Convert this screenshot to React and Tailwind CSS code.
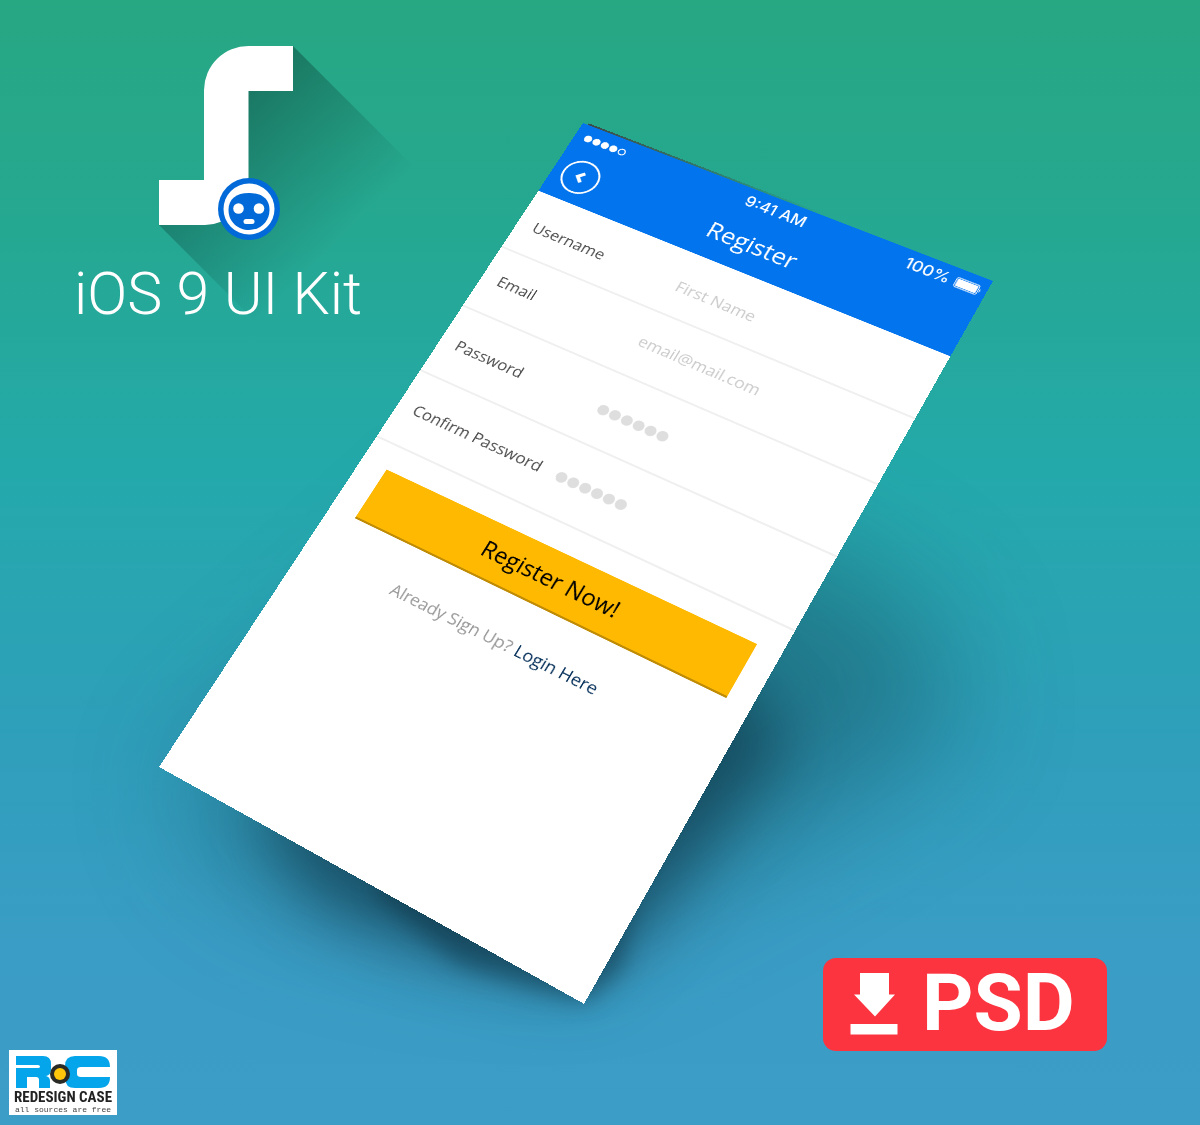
import React from "react";

const SCREEN = { width: 640, height: 1136 };

// Corners of the tilted screen, measured from the top centre of the poster:
// top-left, top-right, bottom-right, bottom-left.
const CORNERS = [
  [-17, 123],
  [393, 281],
  [-16, 1004],
  [-441, 767],
];

function perspective({ width, height }, [[x0, y0], [x1, y1], [x2, y2], [x3, y3]]) {
  const dx1 = x1 - x2;
  const dy1 = y1 - y2;
  const dx2 = x3 - x2;
  const dy2 = y3 - y2;
  const sx = x0 - x1 + x2 - x3;
  const sy = y0 - y1 + y2 - y3;
  const det = dx1 * dy2 - dx2 * dy1;
  const g = (sx * dy2 - sy * dx2) / det;
  const h = (dx1 * sy - dy1 * sx) / det;
  const a = x1 - x0 + g * x1;
  const b = x3 - x0 + h * x3;
  const d = y1 - y0 + g * y1;
  const e = y3 - y0 + h * y3;
  const m = [
    a / width, d / width, 0, g / width,
    b / height, e / height, 0, h / height,
    0, 0, 1, 0,
    x0, y0, 0, 1,
  ];
  return `matrix3d(${m.map((n) => n.toFixed(9)).join(",")})`;
}

const FIELDS = [
  { id: "username", label: "Username", type: "text", hint: "First Name", row: "h-[108px] pt-2", input: "pl-1 text-[24px] placeholder:text-[#cbcbcb]" },
  { id: "email", label: "Email", type: "email", hint: "email@mail.com", row: "h-[110px] pb-2", input: "text-[24px] placeholder:text-[#cbcbcb]" },
  { id: "password", label: "Password", type: "password", hint: "●●●●●●", row: "h-[118px]", input: "text-[21px] font-['DejaVu_Sans',sans-serif] placeholder:text-[#dedede]" },
  { id: "confirm", label: "Confirm Password", type: "password", hint: "●●●●●●", row: "h-[118px] pb-1", input: "text-[21px] font-['DejaVu_Sans',sans-serif] placeholder:text-[#dedede]" },
];

function KitLogo() {
  return (
    <svg className="block h-[300px] w-[340px] overflow-visible" viewBox="140 30 340 300" aria-hidden="true">
      <defs>
        <linearGradient id="long-shadow" gradientUnits="userSpaceOnUse" x1="165" y1="165" x2="290" y2="290">
          <stop offset="0" stopColor="#0a3a33" stopOpacity="0.45" />
          <stop offset="1" stopColor="#0a3a33" stopOpacity="0" />
        </linearGradient>
      </defs>
      <path d="M293 46L473 226L339 405L159 225L204 180V88Z" fill="url(#long-shadow)" />
      <path d="M293 46V91H248.500V181A44 44 0 0 1 205 225H159V180H204V90A44.500 44.500 0 0 1 248.500 46Z" fill="#fff" />
      <circle cx="249" cy="209" r="31" fill="#026ad8" />
      <circle cx="249" cy="209" r="25.500" fill="#fff" />
      <path d="M249 193C262 193 269.500 199 269.500 210C269.500 222 260 230 249 230C238 230 228.500 222 228.500 210C228.500 199 236 193 249 193Z" fill="#026ad8" />
      <circle cx="238.500" cy="208.500" r="5.300" fill="#fff" />
      <circle cx="259" cy="208.500" r="5.300" fill="#fff" />
      <rect x="243.500" y="219" width="11" height="5" rx="2.500" fill="#fff" />
    </svg>
  );
}

function ScreenShadow() {
  return (
    <svg className="pointer-events-none absolute left-1/2 top-0 h-[1125px] w-[1200px] -translate-x-1/2" viewBox="0 0 1200 1125" aria-hidden="true">
      <defs>
        <filter id="soft" x="-50%" y="-50%" width="200%" height="200%" colorInterpolationFilters="sRGB"><feGaussianBlur stdDeviation="60" /></filter>
        <filter id="mid" x="-50%" y="-50%" width="200%" height="200%" colorInterpolationFilters="sRGB"><feGaussianBlur stdDeviation="32" /></filter>
        <filter id="tight" x="-50%" y="-50%" width="200%" height="200%" colorInterpolationFilters="sRGB"><feGaussianBlur stdDeviation="11" /></filter>
      </defs>
      <path d="M180 780L250 880L420 925L585 940L740 860L960 730L930 620L800 540L500 500Z" fill="#0b2c3c" fillOpacity="0.34" filter="url(#soft)" />
      <path d="M260 820L320 905L430 950L575 985L640 930L790 740L700 640L500 650Z" fill="#0b2c3c" fillOpacity="0.55" filter="url(#mid)" />
      <path d="M370 890L460 965L585 1002L622 968L640 850L500 800Z" fill="#0b2c3c" fillOpacity="0.45" filter="url(#tight)" />
    </svg>
  );
}

function StatusBar() {
  return (
    <div className="grid h-[44px] grid-cols-3 items-center pl-[15px] pr-[7px] font-['Inter','Liberation_Sans',sans-serif] font-medium text-white">
      <div className="flex gap-[2px]">
        {[0, 1, 2, 3].map((n) => (
          <span key={n} className="size-[12px] rounded-full bg-white" />
        ))}
        <span className="size-[12px] rounded-full border-2 border-white" />
      </div>
      <div className="text-center text-[24px] leading-none">9:41 AM</div>
      <div className="flex items-center justify-end gap-2 text-[24px] leading-none">
        <span>100%</span>
        <svg className="h-[18px] w-[38px]" viewBox="0 0 40 18" aria-hidden="true">
          <rect x="0.750" y="0.750" width="34.500" height="16.500" rx="3" fill="none" stroke="#fff" strokeWidth="1.200" />
          <rect x="2.500" y="2.500" width="31" height="13" rx="1.500" fill="#fff" />
          <path d="M37 5.500Q40 9 37 12.500Z" fill="#fff" />
        </svg>
      </div>
    </div>
  );
}

function RegisterScreen() {
  return (
    <section
      className="absolute left-1/2 top-0 flex h-[1136px] w-[640px] origin-top-left flex-col bg-white font-['Open_Sans','Noto_Sans',sans-serif]"
      style={{ transform: perspective(SCREEN, CORNERS) }}
    >
      <div className="absolute -top-[3px] left-[8px] h-[4px] w-[380px] bg-linear-to-r from-[#3c4a48] to-transparent" />
      <header className="relative h-[132px] shrink-0 bg-[#0274ee]">
        <StatusBar />
        <div className="grid h-[84px] grid-cols-[1fr_auto_1fr] items-center px-[15px]">
          <button type="button" aria-label="Back" className="flex size-[58px] items-center justify-center rounded-full border-3 border-white">
            <svg className="size-[24px]" viewBox="0 0 22 22" fill="none" stroke="#fff" strokeWidth="5" aria-hidden="true">
              <path d="M14.500 3.500L7 11L14.500 18.500" />
            </svg>
          </button>
          <h2 className="text-[36px] leading-none text-white">Register</h2>
        </div>
      </header>
      <form onSubmit={(e) => e.preventDefault()}>
        {FIELDS.map((f) => (
          <div key={f.id} className={`flex items-center border-b-3 border-[#f0f0f0] pl-[25px] ${f.row}`}>
            <label htmlFor={f.id} className="w-[228px] shrink-0 whitespace-nowrap text-[24px] text-[#4d4d4d]">{f.label}</label>
            <input id={f.id} type={f.type} placeholder={f.hint} className={`h-[60px] min-w-0 flex-1 bg-transparent outline-none ${f.input}`} />
          </div>
        ))}
        <div className="pl-[40px] pr-[34px] pt-[37px]">
          <button type="submit" className="h-[84px] w-full border-b-3 border-[#c08c06] bg-[#ffb901] text-[32px] text-black">
            Register Now!
          </button>
        </div>
      </form>
      <p className="pl-[141px] pt-[48px] text-[24px] text-[#989898]">
        Already Sign Up? <a href="#login" className="text-[#06305a]">Login Here</a>
      </p>
    </section>
  );
}

function CaseLogo() {
  return (
    <div className="flex h-[65px] w-[108px] flex-col items-center bg-white pt-[6px]">
      <svg className="h-[32px] w-[96px] shrink-0" viewBox="0 0 96 32" aria-hidden="true">
        <path d="M1 0H28Q36 0 36 8V13Q36 19 31 20Q35 21 35 25V32H24V24Q24 21 21 21H12V32H1V12H23Q25 12 25 10.500Q25 9 23 9H1Z" fill="#04a5ea" />
        <path d="M60 0H84Q95 0 95 11H66Q62 11 62 14V18Q62 21 66 21H95Q95 32 84 32H60Q50 32 50 22V10Q50 0 60 0Z" fill="#04a5ea" />
        <circle cx="45" cy="18" r="10" fill="#2a2a26" />
        <circle cx="45" cy="18" r="6" fill="#ffc60a" />
      </svg>
      <span className="whitespace-nowrap font-['Roboto_Condensed','Liberation_Sans_Narrow',Roboto,sans-serif] text-[15px] font-bold leading-[18px] text-[#222]">REDESIGN CASE</span>
      <span className="whitespace-nowrap font-['Liberation_Mono',monospace] text-[8px] leading-[8px] text-[#444]">all sources are free</span>
    </div>
  );
}

export default function App() {
  return (
    <main className="relative flex min-h-screen flex-col justify-between overflow-hidden bg-[linear-gradient(180deg,#27a782_0%,#25a893_22%,#24a9ab_42%,#2f9fbb_66%,#3a9dc5_84%,#3c9dc6_100%)]">
      <ScreenShadow />
      <header className="relative flex w-[436px] flex-col pt-[30px]">
        <div className="h-[230px] pl-[140px]">
          <KitLogo />
        </div>
        <h1 className="relative text-center font-['Roboto',sans-serif] text-[59px] font-light leading-[68px] text-white">iOS 9 UI Kit</h1>
      </header>
      <RegisterScreen />
      <footer className="relative flex items-end justify-between pb-[10px] pl-[9px] pr-[93px]">
        <CaseLogo />
        <button type="button" className="mb-[64px] flex h-[93px] w-[284px] items-center gap-[24px] rounded-[13px] bg-[#fc343f] pb-[4px] pl-[27px] font-['Roboto',sans-serif] text-white">
          <svg className="mt-[2px] h-[62px] w-[48px] shrink-0" viewBox="0 0 48 62" fill="#fff" aria-hidden="true">
            <path d="M10 0H39V21.500H45L25 43.500L4 21.500H10Z" />
            <rect x="0.500" y="51" width="47" height="10.500" />
          </svg>
          <span className="text-[80px] font-bold leading-[88px]">PSD</span>
        </button>
      </footer>
    </main>
  );
}
